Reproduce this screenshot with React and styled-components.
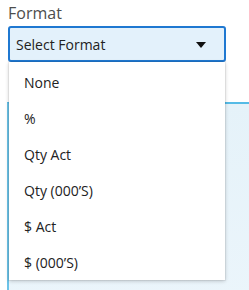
import React from "react";
import styled, { createGlobalStyle } from "styled-components";

const Global = createGlobalStyle`
  html, body { margin: 0; padding: 0; background: #ffffff; overflow: hidden; }
  body { font-family: "Open Sans", "Noto Sans", sans-serif; }
  #root { width: 249px; height: 290px; }
`;

const Page = styled.div`
  position: relative;
  width: 249px;
  height: 290px;
  overflow: hidden;
  padding: 3px 0 0 8px;
  box-sizing: border-box;
`;

const Label = styled.div`
  font-size: 16px;
  line-height: 20px;
  color: #4d4d4d;
  height: 20px;
`;

const Field = styled.div`
  position: relative;
  margin-top: 3px;
  width: 218px;
`;

const SelectBox = styled.div`
  box-sizing: border-box;
  height: 36px;
  width: 218px;
  border: 2px solid #1f78d1;
  border-radius: 3px;
  background: #e3f1fb;
  display: flex;
  align-items: center;
  justify-content: space-between;
  padding: 0 18px 0 6px;
  font-size: 14px;
  color: #222;
`;

const Caret = styled.span`
  width: 0;
  height: 0;
  border-left: 5px solid transparent;
  border-right: 5px solid transparent;
  border-top: 6px solid #111;
  margin-top: 1px;
`;

const Menu = styled.ul`
  position: absolute;
  z-index: 2;
  top: 36px;
  left: 1px;
  width: 216px;
  margin: 0;
  padding: 2px 0 0;
  box-sizing: border-box;
  list-style: none;
  background: #ffffff;
  box-shadow: 0 1px 4px rgba(0, 0, 0, 0.22), 0 0 0 1px rgba(0, 0, 0, 0.05);
`;

const Item = styled.li`
  height: 36px;
  display: flex;
  align-items: center;
  padding-left: 15px;
  font-size: 14px;
  color: #222;
`;

const Panel = styled.div`
  margin: 40px 0 0 -1px;
  height: 200px;
  border-top: 2px solid #55bbe6;
  border-left: 2px solid #6cc3e8;
  background: linear-gradient(180deg, #e5f2f9 0%, #ebf5fb 100%);
`;

const options = ["None", "%", "Qty Act", "Qty (000\u2019S)", "$ Act", "$ (000\u2019S)"];

export default function App() {
  return (
    <Page>
      <Global />
      <Label>Format</Label>
      <Field>
        <SelectBox>
          <span>Select Format</span>
          <Caret />
        </SelectBox>
        <Menu>
          {options.map((o) => (
            <Item key={o}>{o}</Item>
          ))}
        </Menu>
      </Field>
      <Panel />
    </Page>
  );
}
